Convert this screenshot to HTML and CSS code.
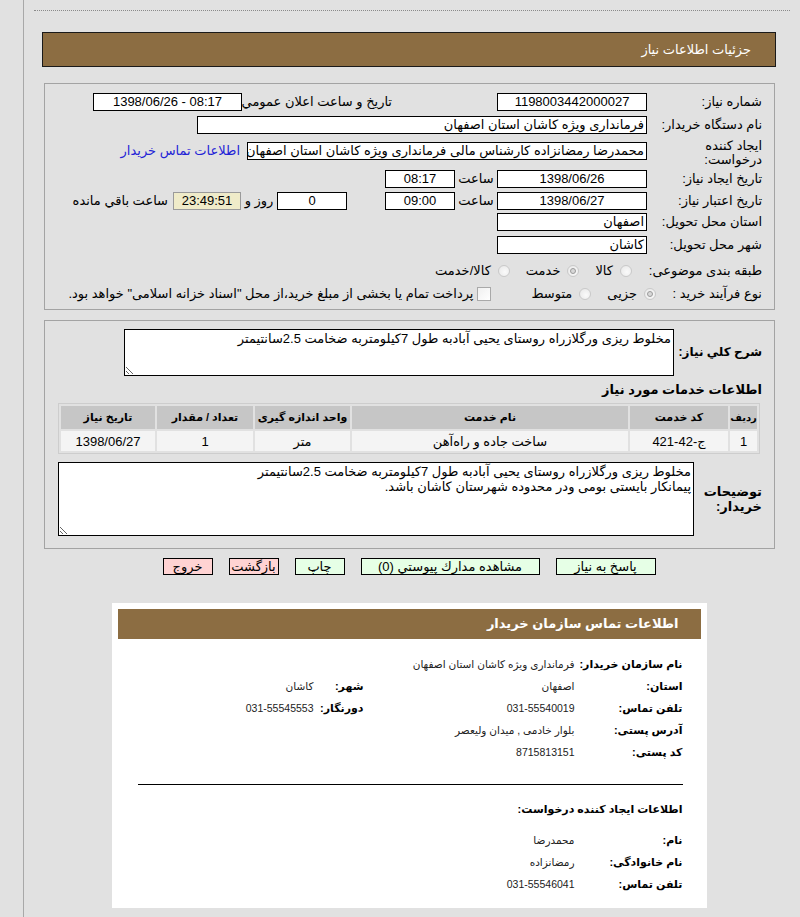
FILE: index.html
```html
<!DOCTYPE html>
<html lang="fa">
<head>
<meta charset="utf-8">
<title>جزئیات اطلاعات نیاز</title>
<link rel="stylesheet" href="styles.css">
</head>
<body>
<div class="page">
  <div class="dots"></div>
  <div class="titlebar">جزئیات اطلاعات نیاز</div>

  <div class="fs fs1">
    <div class="row h23">
      <div class="lbl">شماره نیاز:</div>
      <div class="box w150">1198003442000027</div>
      <div class="annc">تاریخ و ساعت اعلان عمومي:</div>
      <div class="box w149 ltr">1398/06/26 - 08:17</div>
    </div>
    <div class="row h23">
      <div class="lbl">نام دستگاه خریدار:</div>
      <div class="box w450 tr">فرمانداری ویژه کاشان استان اصفهان</div>
    </div>
    <div class="row h31">
      <div class="lbl two">ایجاد کننده درخواست:</div>
      <div class="box w400 tr mt3">محمدرضا رمضانزاده کارشناس مالی فرمانداری ویژه کاشان استان اصفهان</div>
      <a class="link mt3">اطلاعات تماس خریدار</a>
    </div>
    <div class="row h22">
      <div class="lbl">تاریخ ایجاد نیاز:</div>
      <div class="box w150">1398/06/26</div>
      <div class="sa">ساعت</div>
      <div class="box w70">08:17</div>
    </div>
    <div class="row h21">
      <div class="lbl">تاریخ اعتبار نیاز:</div>
      <div class="box w150">1398/06/27</div>
      <div class="sa">ساعت</div>
      <div class="box w70">09:00</div>
      <div class="box w70 gap38">0</div>
      <div class="ruz">روز و</div>
      <div class="box timer">23:49:51</div>
      <div class="rem">ساعت باقي مانده</div>
    </div>
    <div class="row h23">
      <div class="lbl">استان محل تحویل:</div>
      <div class="box w150 tr">اصفهان</div>
    </div>
    <div class="row h24">
      <div class="lbl">شهر محل تحویل:</div>
      <div class="box w150 tr">کاشان</div>
    </div>
    <div class="row h22 mid">
      <div class="lbl">طبقه بندی موضوعی:</div>
      <span class="radio first8"></span><span class="otext">کالا</span>
      <span class="radio on"></span><span class="otext">خدمت</span>
      <span class="radio"></span><span class="otext">کالا/خدمت</span>
    </div>
    <div class="row h24 mid">
      <div class="lbl short">نوع فرآیند خرید :</div>
      <span class="radio on"></span><span class="otext">جزیی</span>
      <span class="radio"></span><span class="otext">متوسط</span>
      <span class="check"></span><span class="ctext">پرداخت تمام یا بخشی از مبلغ خرید،از محل "اسناد خزانه اسلامی" خواهد بود.</span>
    </div>
  </div>

  <div class="fs fs2">
    <div class="row mid">
      <div class="blbl w88">شرح كلي نياز:</div>
      <textarea class="ta ta1" readonly>مخلوط ریزی ورگلازراه روستای یحیی آبادبه طول 7کیلومتربه ضخامت 2.5سانتیمتر</textarea>
    </div>
    <div class="heading">اطلاعات خدمات مورد نیاز</div>
    <table class="svc">
      <colgroup>
        <col class="c1"><col class="c2"><col class="c3"><col class="c4"><col class="c5"><col class="c6">
      </colgroup>
      <thead>
        <tr>
          <th class="th1">ردیف</th>
          <th>کد خدمت</th>
          <th>نام خدمت</th>
          <th>واحد اندازه گیری</th>
          <th>تعداد / مقدار</th>
          <th>تاریخ نیاز</th>
        </tr>
      </thead>
      <tbody>
        <tr>
          <td>1</td>
          <td>ج-42-421</td>
          <td>ساخت جاده و راه‌آهن</td>
          <td>متر</td>
          <td>1</td>
          <td>1398/06/27</td>
        </tr>
      </tbody>
    </table>
    <div class="row mid mt8">
      <div class="blbl w68 wrap">توضیحات خریدار:</div>
      <textarea class="ta ta2" readonly>مخلوط ریزی ورگلازراه روستای یحیی آبادبه طول 7کیلومتربه ضخامت 2.5سانتیمتر
پیمانکار بایستی بومی ودر محدوده شهرستان کاشان باشد.</textarea>
    </div>
  </div>

  <div class="btns">
    <div class="btn green b100">پاسخ به نیاز</div>
    <div class="btn green b179">مشاهده مدارك پيوستي (0)</div>
    <div class="btn green b50">چاپ</div>
    <div class="btn pink b50">بازگشت</div>
    <div class="btn pink b50">خروج</div>
  </div>

  <div class="card">
    <div class="card-head">اطلاعات تماس سازمان خریدار</div>
    <table class="info">
      <colgroup>
        <col class="ck"><col class="cv"><col class="ck2"><col class="cv2">
      </colgroup>
      <tr>
        <td class="k">نام سازمان خریدار:</td>
        <td class="v" colspan="3">فرمانداری ویژه کاشان استان اصفهان</td>
      </tr>
      <tr>
        <td class="k">استان:</td>
        <td class="v">اصفهان</td>
        <td class="k">شهر:</td>
        <td class="v">کاشان</td>
      </tr>
      <tr>
        <td class="k">تلفن تماس:</td>
        <td class="v">031-55540019</td>
        <td class="k">دورنگار:</td>
        <td class="v">031-55545553</td>
      </tr>
      <tr>
        <td class="k">آدرس پستی:</td>
        <td class="v" colspan="3">بلوار خادمی , میدان ولیعصر</td>
      </tr>
      <tr>
        <td class="k">کد پستی:</td>
        <td class="v" colspan="3">8715813151</td>
      </tr>
    </table>
    <div class="rule"></div>
    <div class="sub">اطلاعات ایجاد کننده درخواست:</div>
    <table class="info info2">
      <colgroup>
        <col class="ck"><col class="cv">
      </colgroup>
      <tr>
        <td class="k">نام:</td>
        <td class="v">محمدرضا</td>
      </tr>
      <tr>
        <td class="k">نام خانوادگی:</td>
        <td class="v">رمضانزاده</td>
      </tr>
      <tr>
        <td class="k">تلفن تماس:</td>
        <td class="v">031-55546041</td>
      </tr>
    </table>
  </div>
</div>
</body>
</html>
```

FILE: styles.css
```css
html, body {
  margin: 0;
  padding: 0;
}
body {
  background: #e1e1e1;
  font-family: "Liberation Sans", "DejaVu Sans", sans-serif;
  font-size: 13px;
  color: #000;
}
.page {
  margin-left: 23px;
  border-left: 1px solid #a8a8a8;
  height: 917px;
  box-sizing: border-box;
  padding: 10px 24px 0 18px;
  direction: rtl;
  overflow: hidden;
}
.dots {
  border-top: 1px dotted #8a8a8a;
  margin: 0 -14px 0 -8px;
}
.titlebar {
  margin-top: 21px;
  height: 33px;
  border: 1px solid #1a1a1a;
  background: #8c6d42;
  color: #fff;
  line-height: 33px;
  padding-right: 24px;
  font-size: 13px;
}
.fs {
  border: 1px solid #a3a3a3;
  margin: 0 1px 0 2px;
}
.fs1 {
  margin-top: 16px;
  padding: 9px 12px 3px 0;
}
.row {
  display: flex;
  align-items: flex-start;
}
.row.mid { align-items: center; }
.h21 { height: 21px; }
.h22 { height: 22px; }
.h23 { height: 23px; }
.h24 { height: 24px; }
.h31 { height: 31px; }
.mt3 { margin-top: 3px; }
.mt8 { margin-top: 8px; }
.lbl {
  width: 110px;
  margin-left: 5px;
  line-height: 18px;
  flex: none;
  white-space: nowrap;
}
.lbl.two {
  line-height: 14px;
  white-space: normal;
}
.lbl.short { width: 101px; }
.box {
  box-sizing: border-box;
  height: 18px;
  border: 1px solid #000;
  background: #fff;
  line-height: 16px;
  text-align: center;
  flex: none;
  white-space: nowrap;
  overflow: hidden;
}
.box.tr {
  text-align: right;
  padding-right: 2px;
}
.ltr { direction: ltr; }
.w70 { width: 70px; }
.w149 { width: 149px; }
.w150 { width: 150px; }
.w400 { width: 400px; }
.w450 { width: 450px; }
.annc {
  width: 145px;
  margin-right: 105px;
  margin-left: 5px;
  line-height: 18px;
  white-space: nowrap;
}
.link {
  margin-right: 7px;
  line-height: 18px;
  color: #2323d6;
  white-space: nowrap;
}
.sa {
  width: 42px;
  text-align: center;
  line-height: 18px;
}
.gap38 { margin-right: 38px; }
.ruz {
  width: 36px;
  text-align: center;
  line-height: 18px;
  white-space: nowrap;
}
.timer {
  width: 68px;
  background: #efebc9;
  border-color: #9a9a9a;
}
.rem {
  margin-right: 5px;
  line-height: 18px;
  white-space: nowrap;
}
.radio {
  position: relative;
  box-sizing: border-box;
  width: 12px;
  height: 12px;
  border-radius: 50%;
  border: 1px solid #c9c9c9;
  background: radial-gradient(circle at 60% 60%, #fafafa, #e6e6e6);
  flex: none;
}
.radio.on::after {
  content: "";
  position: absolute;
  left: 2px;
  top: 2px;
  width: 6px;
  height: 6px;
  box-sizing: border-box;
  border-radius: 50%;
  border: 1.5px solid #9b9b9b;
  background: #d8d8d8;
}
.first8 { margin-right: 15px; }
.otext {
  margin-right: 7px;
  margin-left: 16px;
  line-height: 18px;
  white-space: nowrap;
}
.check {
  box-sizing: border-box;
  width: 14px;
  height: 14px;
  border: 1px solid #a9a9a9;
  background: linear-gradient(135deg, #f0f0f0, #fff);
  margin-right: 24px;
  flex: none;
}
.ctext {
  margin-right: 4px;
  line-height: 18px;
  white-space: nowrap;
}
.fs2 {
  margin-top: 10px;
  padding: 8px 12px 12px 0;
}
.blbl {
  font-weight: bold;
  font-size: 12px;
  line-height: 15px;
  flex: none;
  white-space: nowrap;
}
.blbl.wrap {
  white-space: normal;
  font-size: 13px;
}
.w88 { width: 88px; }
.w68 { width: 68px; }
.ta {
  box-sizing: border-box;
  border: 1px solid #000;
  background: #fff;
  font-family: "Liberation Sans", "DejaVu Sans", sans-serif;
  font-size: 13px;
  line-height: 15px;
  padding: 1px 2px;
  margin: 0;
  direction: rtl;
  color: #000;
  outline: none;
}
.ta1 {
  width: 550px;
  height: 47px;
}
.ta2 {
  width: 636px;
  height: 74px;
}
.heading {
  font-weight: bold;
  margin-top: 6px;
  line-height: 16px;
}
.svc {
  margin: 5px 2px 0 0;
  width: 700px;
  table-layout: fixed;
  border: 1px solid #cdcdcd;
  border-collapse: separate;
  border-spacing: 2px;
}
.svc th {
  background: #c6c6c6;
  height: 23px;
  padding: 0;
  font-size: 11px;
  font-weight: bold;
  white-space: nowrap;
}
.svc th.th1 {
  font-size: 10px;
}
.svc td {
  background: #f4f4f4;
  height: 20px;
  padding: 0;
  text-align: center;
  white-space: nowrap;
}
.c1 { width: 27px; }
.c2 { width: 98px; }
.c3 { width: 276px; }
.c4 { width: 95px; }
.c5 { width: 96px; }
.c6 { width: 94px; }
.btns {
  display: flex;
  justify-content: center;
  gap: 16px;
  margin-top: 9px;
}
.btn {
  box-sizing: border-box;
  height: 17px;
  border: 1px solid #000;
  line-height: 15px;
  text-align: center;
  white-space: nowrap;
}
.green { background: #e6ffe6; }
.pink { background: #ffd3d3; }
.b50 { width: 50px; }
.b100 { width: 100px; }
.b179 { width: 179px; }
.card {
  margin: 28px auto 0;
  width: 595px;
  height: 305px;
  box-sizing: border-box;
  background: #fff;
  padding: 6px;
}
.card-head {
  height: 30px;
  line-height: 30px;
  background: #8c6d42;
  color: #fff;
  font-weight: bold;
  font-size: 13px;
  padding-right: 22px;
}
.info {
  margin: 14px 18px 0 0;
  border-collapse: collapse;
  table-layout: fixed;
  width: 420px;
}
.ck { width: 108px; }
.cv { width: 211px; }
.ck2 { width: 50px; }
.cv2 { width: 51px; }
.info td {
  height: 22px;
  padding: 0;
  white-space: nowrap;
}
.info .k {
  font-weight: bold;
  font-size: 11px;
}
.info .v {
  font-size: 10.5px;
  color: #222;
}
.rule {
  border-top: 1px solid #000;
  margin: 21px 18px 0 20px;
}
.sub {
  font-weight: bold;
  font-size: 11px;
  line-height: 16px;
  margin: 16px 18px 0 0;
}
.info2 {
  margin-top: 12px;
  width: 319px;
}
```
